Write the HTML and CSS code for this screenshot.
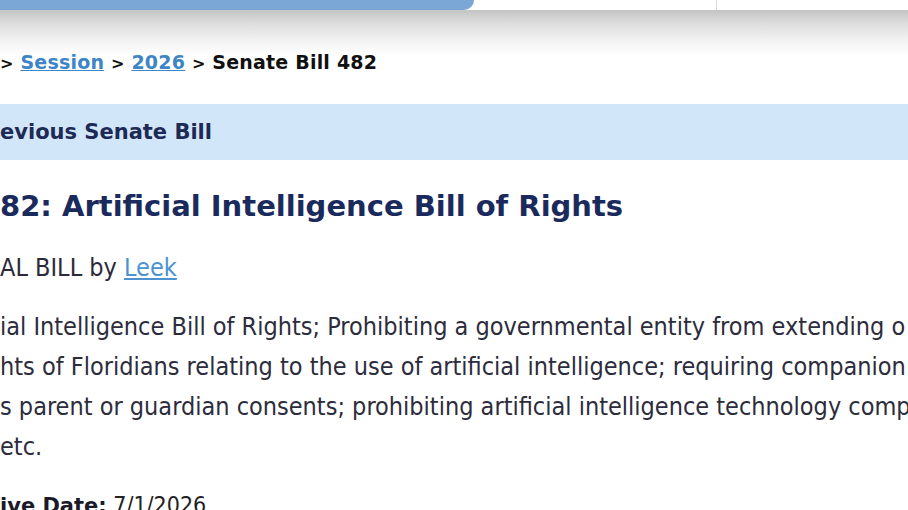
FILE: index.html
```html
<!DOCTYPE html>
<html>
<head>
<meta charset="utf-8">
<link rel="stylesheet" href="styles.css">
</head>
<body>
<header class="topbar">
  <div class="tab-active"></div>
  <div class="tab-rest"><span class="tab-divider"></span></div>
</header>
<div class="crumb-area">
  <nav class="crumbs">
    <span class="sep">&gt;</span> <a href="#">Session</a> <span class="sep">&gt;</span> <a href="#">2026</a> <span class="sep">&gt;</span> <span class="current">Senate Bill 482</span>
  </nav>
</div>
<div class="prevbar"><span>evious Senate Bill</span></div>
<main class="content">
  <h1 class="title">82: Artificial Intelligence Bill of Rights</h1>
  <p class="byline">AL BILL by <a href="#">Leek</a></p>
  <p class="desc">
    <span class="line">ial Intelligence Bill of Rights; Prohibiting a governmental entity from extending o</span>
    <span class="line">hts of Floridians relating to the use of artificial intelligence; requiring companion</span>
    <span class="line">s parent or guardian consents; prohibiting artificial intelligence technology compa</span>
    <span class="line">etc.</span>
  </p>
  <p class="effective"><strong>ive Date:</strong> 7/1/2026</p>
</main>
</body>
</html>
```
FILE: styles.css
```css
html, body {
  margin: 0;
  padding: 0;
  background: #ffffff;
  overflow: hidden;
  width: 908px;
  height: 510px;
}
body {
  font-family: "DejaVu Sans", Verdana, sans-serif;
  color: #222;
}
.topbar {
  display: flex;
  height: 10px;
}
.tab-active {
  width: 474px;
  background: #7ba7d7;
  border-bottom-right-radius: 10px 10px;
}
.tab-rest {
  flex: 1;
  background: #ffffff;
  position: relative;
}
.tab-divider {
  position: absolute;
  left: 242px;
  top: 0;
  width: 1px;
  height: 10px;
  background: #d8d8d8;
}
.crumb-area {
  height: 94px;
  background: linear-gradient(#c4c4c4 0px, #dedede 14px, #f2f2f2 30px, #ffffff 46px, #ffffff);
  display: flex;
  flex-direction: column;
}
.crumbs {
  margin-top: 32px;
  font-size: 19px;
  font-weight: bold;
  line-height: 40px;
  height: 40px;
  white-space: nowrap;
  color: #111;
  letter-spacing: 0.2px;
}
.crumbs a {
  color: #3d85c6;
  text-decoration: underline;
}
.crumbs .sep {
  font-size: 16px;
}
.prevbar {
  height: 56px;
  background: #d2e6fa;
  display: flex;
  align-items: center;
  font-size: 21px;
  font-weight: bold;
  color: #1d2a55;
}
.content {
  white-space: nowrap;
}
.title {
  margin: 0;
  padding-top: 28px;
  font-size: 29px;
  line-height: 36px;
  font-weight: bold;
  color: #1b2a5c;
}
.byline {
  margin: 0;
  padding-top: 30px;
  font-family: "DejaVu Sans Condensed", "DejaVu Sans", sans-serif;
  font-size: 25px;
  line-height: 28px;
  color: #2a2a3a;
}
.byline a {
  color: #4b92cf;
  text-decoration: underline;
}
.desc {
  margin: 0;
  padding-top: 25px;
  font-family: "DejaVu Sans Condensed", "DejaVu Sans", sans-serif;
  font-size: 25px;
  line-height: 40px;
  color: #2c2c3c;
}
.desc .line {
  display: block;
}
.effective {
  margin: 0;
  padding-top: 24px;
  font-size: 23px;
  line-height: 28px;
  color: #222;
  font-family: "DejaVu Sans Condensed", "DejaVu Sans", sans-serif;
}
.effective strong {
  font-family: "DejaVu Sans", sans-serif;
  font-size: 21px;
  color: #1a1a2a;
}
```
